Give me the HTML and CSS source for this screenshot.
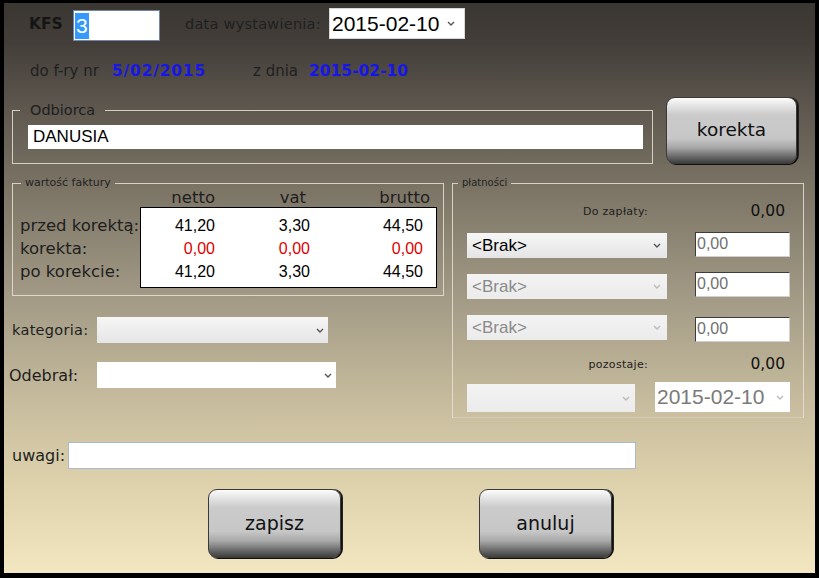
FILE: index.html
```html
<!DOCTYPE html>
<html lang="pl">
<head>
<meta charset="utf-8">
<title>Korekta</title>
<link rel="stylesheet" href="styles.css">
</head>
<body>
<div class="window">
  <div class="row r1">
    <span class="kfs">KFS</span>
    <div class="inp kfs-inp"><span class="hl">3</span></div>
    <span class="data-lbl">data wystawienia:</span>
    <div class="select sel-top"><span class="val">2015-02-10</span><svg class="chev" width="8" height="5" viewBox="0 0 8 5"><path d="M1 1l3 3 3-3" fill="none" stroke="#555" stroke-width="1.4"/></svg></div>
  </div>
  <div class="row r2">
    <span class="ref-lbl">do f-ry nr</span>
    <span class="blue nr">5/02/2015</span>
    <span class="ref-lbl zd">z dnia</span>
    <span class="blue">2015-02-10</span>
  </div>
  <div class="row r3">
    <fieldset class="fs odb">
      <legend>Odbiorca</legend>
      <div class="odb-body"><div class="inp odb-inp">DANUSIA</div></div>
    </fieldset>
    <button class="btn korekta">korekta</button>
  </div>
  <div class="main">
    <div class="left">
      <fieldset class="fs wart">
        <legend>wartość faktury</legend>
        <div class="heads"><span></span><span>netto</span><span>vat</span><span>brutto</span></div>
        <div class="tbl">
          <div class="labels">
            <div>przed korektą:</div>
            <div>korekta:</div>
            <div>po korekcie:</div>
          </div>
          <div class="box">
            <span>41,20</span><span>3,30</span><span>44,50</span>
            <span class="red">0,00</span><span class="red">0,00</span><span class="red">0,00</span>
            <span>41,20</span><span>3,30</span><span>44,50</span>
          </div>
        </div>
      </fieldset>
      <div class="frow kat">
        <span class="flbl">kategoria:</span>
        <div class="select grey w-kat"><svg class="chev" width="8" height="5" viewBox="0 0 8 5"><path d="M1 1l3 3 3-3" fill="none" stroke="#555" stroke-width="1.4"/></svg></div>
      </div>
      <div class="frow odeb">
        <span class="flbl odeb-lbl">Odebrał:</span>
        <div class="select white w-odeb"><svg class="chev" width="8" height="5" viewBox="0 0 8 5"><path d="M1 1l3 3 3-3" fill="none" stroke="#555" stroke-width="1.4"/></svg></div>
      </div>
    </div>
    <fieldset class="fs plat">
      <legend>płatności</legend>
      <div class="plat-body">
        <div class="sumrow first"><span class="slbl">Do zapłaty:</span><span class="sval">0,00</span></div>
        <div class="prow p1">
          <div class="select grey w-pay"><span class="val brak">&lt;Brak&gt;</span><svg class="chev" width="8" height="5" viewBox="0 0 8 5"><path d="M1 1l3 3 3-3" fill="none" stroke="#555" stroke-width="1.4"/></svg></div>
          <div class="inp amt">0,00</div>
        </div>
        <div class="prow p2">
          <div class="select dis w-pay"><span class="val brak">&lt;Brak&gt;</span><svg class="chev" width="8" height="5" viewBox="0 0 8 5"><path d="M1 1l3 3 3-3" fill="none" stroke="#bbb" stroke-width="1.4"/></svg></div>
          <div class="inp amt">0,00</div>
        </div>
        <div class="prow p3">
          <div class="select dis w-pay"><span class="val brak">&lt;Brak&gt;</span><svg class="chev" width="8" height="5" viewBox="0 0 8 5"><path d="M1 1l3 3 3-3" fill="none" stroke="#bbb" stroke-width="1.4"/></svg></div>
          <div class="inp amt">0,00</div>
        </div>
        <div class="sumrow second"><span class="slbl">pozostaje:</span><span class="sval">0,00</span></div>
        <div class="prow p4">
          <div class="select dis w-last"><svg class="chev" width="8" height="5" viewBox="0 0 8 5"><path d="M1 1l3 3 3-3" fill="none" stroke="#bbb" stroke-width="1.4"/></svg></div>
          <div class="select white w-date"><span class="val date-grey">2015-02-10</span><svg class="chev" width="8" height="5" viewBox="0 0 8 5"><path d="M1 1l3 3 3-3" fill="none" stroke="#bbb" stroke-width="1.4"/></svg></div>
        </div>
      </div>
    </fieldset>
  </div>
  <div class="row uwagi">
    <span class="uw-lbl">uwagi:</span>
    <div class="inp uw-inp"></div>
  </div>
  <div class="row btns">
    <button class="btn big">zapisz</button>
    <button class="btn big">anuluj</button>
  </div>
</div>
</body>
</html>
```

FILE: styles.css
```css
* { box-sizing: border-box; }
html, body { margin: 0; padding: 0; background: #000; }
body { width: 819px; height: 578px; overflow: hidden; font-family: "DejaVu Sans", Verdana, sans-serif; color: #1c1c1c; }

.window {
  width: 819px;
  height: 578px;
  border-style: solid;
  border-color: #000;
  border-width: 3px 4px 5px 4px;
  background: linear-gradient(180deg, #3a3632 0px, #433e39 40px, #5a544c 97px, #7c7566 187px, #a39b86 297px, #c6bb9d 397px, #ddd1ac 477px, #f3e7c1 570px);
  display: flex;
  flex-direction: column;
}

.row { display: flex; }

/* row 1 */
.r1 { margin-top: 5px; height: 33px; padding-left: 25px; align-items: flex-start; }
.kfs { width: 44px; font-weight: bold; font-size: 15.5px; line-height: 33px; color: #151515; }
.inp { background: #fff; }
.kfs-inp { width: 87px; height: 31px; margin-top: 2px; border: 1px solid #6f86a8; padding: 2px 0 0 1px; }
.hl { display: inline-block; background: #3399ff; color: #fff; font-family: "Liberation Sans", Arial, sans-serif; font-size: 21px; line-height: 26px; padding: 0 1px; }
.data-lbl { margin-left: 25px; width: 144px; font-size: 14.5px; line-height: 33px; color: #202020; letter-spacing: 0.25px; }

.select { display: flex; align-items: center; }
.select .chev { margin-left: auto; flex: none; }
.val { font-family: "Liberation Sans", Arial, sans-serif; color: #000; white-space: nowrap; }
.sel-top { width: 136px; height: 31px; background: #fff; border: 1px solid #d8d8d8; padding-left: 2px; }
.sel-top .val { font-size: 21px; }
.sel-top .chev { margin-right: 9px; }

/* row 2 */
.r2 { margin-top: 21px; height: 18px; padding-left: 26px; align-items: center; }
.ref-lbl { font-size: 15px; color: #202020; width: 82px; }
.ref-lbl.zd { width: 56px; }
.blue { color: #1616e8; font-weight: bold; font-size: 15.5px; }
.blue.nr { width: 141px; letter-spacing: 0.8px; }

/* fieldsets */
.fs { margin: 0; padding: 0; border: 1px solid rgba(232, 226, 214, 0.85); min-width: 0; }
.fs legend { padding: 0 4px; color: #222; }

/* row 3 */
.r3 { margin-top: 17px; height: 67px; padding-left: 8px; align-items: flex-end; }
.odb { width: 641px; }
.odb legend { margin-left: 7px; padding: 0 10px; font-size: 14.5px; line-height: 16px; color: #1e1e1e; }
.odb-body { padding: 7px 7px 14px 15px; }
.odb-inp { width: 615px; height: 24px; font-family: "Liberation Sans", Arial, sans-serif; font-size: 17px; line-height: 24px; padding-left: 5px; color: #000; }
.korekta { margin-left: 13px; width: 131px; height: 67px; align-self: flex-start; }

.btn {
  border: 1px solid #3a3a3a;
  border-radius: 9px;
  background: linear-gradient(180deg, #fbfbfb 0%, #e4e4e4 12%, #cbcbcb 26%, #c7c7c7 62%, #a8a8a8 76%, #6a6a6a 90%, #3e3e3e 100%);
  box-shadow: 1px 1px 0 #111, 2px 0 0 #222;
  font-family: "DejaVu Sans", Verdana, sans-serif;
  font-size: 18.5px;
  color: #111;
  padding: 0 0 2px 0;
}

/* main */
.main { margin-top: 13px; display: flex; padding-left: 8px; align-items: flex-start; }
.left { width: 432px; display: flex; flex-direction: column; }
.wart { width: 432px; }
.wart legend { margin-left: 8px; font-size: 11px; line-height: 12px; }
.heads { display: grid; grid-template-columns: 127px 75px 91px 124px; height: 17px; line-height: 17px; font-size: 16.5px; color: #1e1e1e; }
.heads span { text-align: right; }
.tbl { display: flex; margin-top: 1px; padding-bottom: 7px; }
.labels { width: 127px; padding: 7px 0 0 7px; font-size: 16.5px; color: #1e1e1e; }
.labels div { height: 23px; line-height: 23px; white-space: nowrap; }
.box {
  width: 297px; height: 81px; background: #fff; border: 1px solid #000;
  padding: 6px 13px 0 0;
  display: grid; grid-template-columns: 74px 95px 113px; grid-auto-rows: 23px;
  font-family: "Liberation Sans", Arial, sans-serif; font-size: 16px; line-height: 23px; color: #000;
}
.box span { text-align: right; }
.box .red { color: #e00000; }

.frow { display: flex; align-items: center; height: 26px; }
.kat { margin-top: 21px; }
.odeb { margin-top: 19px; }
.flbl { width: 85px; font-size: 14.5px; color: #1e1e1e; letter-spacing: 0.3px; }
.odeb-lbl { margin-left: -3px; width: 88px; font-size: 16px; letter-spacing: 0; }
.grey { background: linear-gradient(180deg, #f6f6f6, #e5e5e5); }
.white { background: #fff; }
.dis { background: linear-gradient(180deg, #f3f3f3, #ebebeb); }
.w-kat { width: 231px; height: 26px; }
.w-kat .chev { margin-right: 4px; }
.w-odeb { width: 239px; height: 26px; }
.w-odeb .chev { margin-right: 4px; }

.plat { width: 352px; margin-left: 8px; border-bottom-color: rgba(232, 226, 214, 0.35); }
.plat legend { margin-left: 5px; font-size: 10px; line-height: 12px; }
.plat-body { padding: 0 0 5px 14px; }
.sumrow { display: flex; align-items: center; height: 20px; }
.sumrow.first { margin-top: 12px; }
.sumrow.second { margin-top: 13px; }
.slbl { width: 181px; text-align: right; font-size: 11px; color: #1e1e1e; letter-spacing: 0.3px; }
.sval { width: 137px; text-align: right; font-size: 15.5px; color: #111; }
.prow { display: flex; align-items: flex-start; height: 26px; }
.p1 { margin-top: 11px; }
.p1 .select { margin-top: 1px; }
.p2 { margin-top: 14px; }
.p2 .select { margin-top: 2px; }
.p3 { margin-top: 17px; }
.p3 .amt { margin-top: 2px; }
.p4 { margin-top: 8px; height: 30px; }
.w-pay { width: 200px; height: 25px; padding-left: 5px; }
.w-pay .chev { margin-right: 6px; }
.brak { font-size: 17px; }
.dis .brak { color: #8a8a8a; }
.amt {
  margin-left: 28px; width: 95px; height: 25px;
  border-top: 1px solid #3c3c3c; border-left: 1px solid #3c3c3c;
  border-right: 1px solid #d0d0d0; border-bottom: 1px solid #d0d0d0;
  font-family: "Liberation Sans", Arial, sans-serif; font-size: 16px; line-height: 22px; color: #707070; padding-left: 1px;
}
.w-last { width: 168px; height: 28px; margin-top: 2px; }
.w-last .chev { margin-right: 5px; }
.w-date { margin-left: 20px; width: 135px; height: 30px; padding-left: 2px; }
.w-date .chev { margin-right: 6px; }
.date-grey { font-size: 21px; color: #7a7a7a; }

/* uwagi */
.uwagi { margin-top: 24px; height: 27px; padding-left: 8px; align-items: center; }
.uw-lbl { width: 56px; font-size: 16px; color: #1e1e1e; }
.uw-inp { width: 568px; height: 27px; border: 1px solid #a9b9cf; }

/* buttons */
.btns { margin-top: 20px; padding-left: 204px; gap: 138px; }
.btn.big { width: 133px; height: 69px; font-size: 19px; }
```
